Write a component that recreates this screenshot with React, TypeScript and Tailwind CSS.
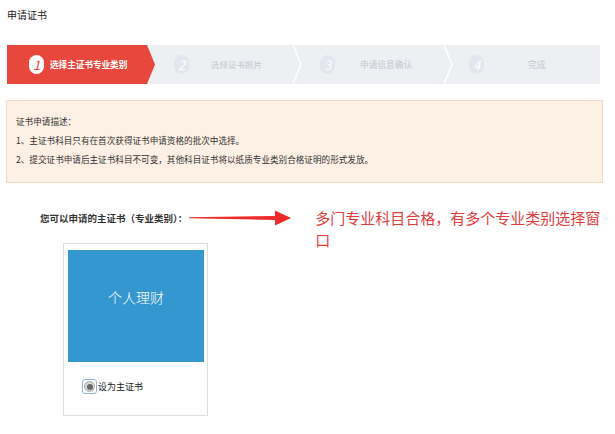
import React from "react";

const font = { fontFamily: '"Noto Sans CJK SC", "Noto Sans", sans-serif' };

function Chevron() {
  return (
    <svg width="12" height="39" viewBox="0 0 12 39" className="shrink-0 -mx-[6px]">
      <polyline points="2,0 10,19.5 2,39" fill="none" stroke="#ffffff" strokeWidth="1.5" />
    </svg>
  );
}

function GrayCircle({ n }: { n: string }) {
  return (
    <div className="w-[15px] h-[19px] rounded-full bg-[#e2e6ee] flex items-center justify-center text-[13px] leading-none text-white italic shrink-0">
      {n}
    </div>
  );
}

export default function App() {
  return (
    <div className="w-[615px] h-[434px] bg-white overflow-hidden text-[#333]" style={font}>
      <div className="pt-[9px] pl-[7px] text-[10px] leading-[12px] text-[#222]">申请证书</div>

      {/* Step bar */}
      <div className="mt-[24px] ml-[7px] w-[593px] h-[39px] bg-[#edeff3] flex items-center">
        <div
          className="w-[148px] h-full bg-[#e8483b] flex items-center shrink-0"
          style={{ clipPath: "polygon(0 0, 140px 0, 148px 50%, 140px 100%, 0 100%)" }}
        >
          <div className="ml-[22px] w-[15px] h-[19px] rounded-full bg-white flex items-center justify-center text-[13px] leading-none text-[#e8483b] italic">
            1
          </div>
          <div className="ml-[6px] text-[8.7px] font-bold text-white tracking-[-0.1px]">选择主证书专业类别</div>
        </div>
        <div className="w-[142px] h-full flex items-center shrink-0">
          <div className="ml-[19px]"><GrayCircle n="2" /></div>
          <div className="ml-[22px] text-[8.5px] text-[#c3c7ce]">选择证书照片</div>
        </div>
        <Chevron />
        <div className="w-[151px] h-full flex items-center shrink-0">
          <div className="ml-[23px]"><GrayCircle n="3" /></div>
          <div className="ml-[25px] text-[8.7px] text-[#c3c7ce]">申请信息确认</div>
        </div>
        <Chevron />
        <div className="flex-1 h-full flex items-center">
          <div className="ml-[21px]"><GrayCircle n="4" /></div>
          <div className="ml-[44px] text-[8.7px] text-[#c3c7ce]">完成</div>
        </div>
      </div>

      {/* Notice */}
      <div className="mt-[16px] ml-[6px] w-[597px] h-[83px] bg-[#fdf0e4] border border-[#f3dcc6] pt-[11px] pl-[9px] text-[8.6px] leading-[19px] text-[#333]">
        <div>证书申请描述：</div>
        <div>1、主证书科目只有在首次获得证书申请资格的批次中选择。</div>
        <div>2、提交证书申请后主证书科目不可变，其他科目证书将以纸质专业类别合格证明的形式发放。</div>
      </div>

      {/* Label + arrow + note */}
      <div className="mt-[24px] flex items-start h-[22px]">
        <div className="ml-[40px] text-[9.5px] leading-[22px] font-bold text-[#333] whitespace-nowrap">您可以申请的主证书（专业类别）：</div>
        <svg width="104" height="22" viewBox="0 0 104 22" className="ml-[2px] shrink-0">
          <polygon points="0,10.2 86,9 86,3.5 102,11 86,18.5 86,13 0,11.2" fill="#ee2a2a" />
        </svg>
        <div className="ml-[22px] w-[292px] text-[15px] leading-[22px] text-[#e23b3b]">
          多门专业科目合格，有多个专业类别选择窗口
        </div>
      </div>

      {/* Card */}
      <div className="mt-[14px] ml-[63px] w-[145px] h-[173px] border border-[#dedede] pt-[6px] pl-[4px]">
        <div className="w-[136px] h-[112px] bg-[#3597cf] flex items-center justify-center text-white text-[14px] font-light pb-[18px]">
          个人理财
        </div>
        <div className="mt-[17px] ml-[14px] flex items-center">
          <div className="w-[15px] h-[15px] rounded-[3px] border border-[#8fb4e6] flex items-center justify-center">
            <div className="w-[11px] h-[11px] rounded-full bg-[#d8d8d8] border border-[#a8a8a8] flex items-center justify-center">
              <div className="w-[6px] h-[6px] rounded-full bg-[#666]" />
            </div>
          </div>
          <div className="ml-[1px] text-[9px] text-[#222]">设为主证书</div>
        </div>
      </div>
    </div>
  );
}
